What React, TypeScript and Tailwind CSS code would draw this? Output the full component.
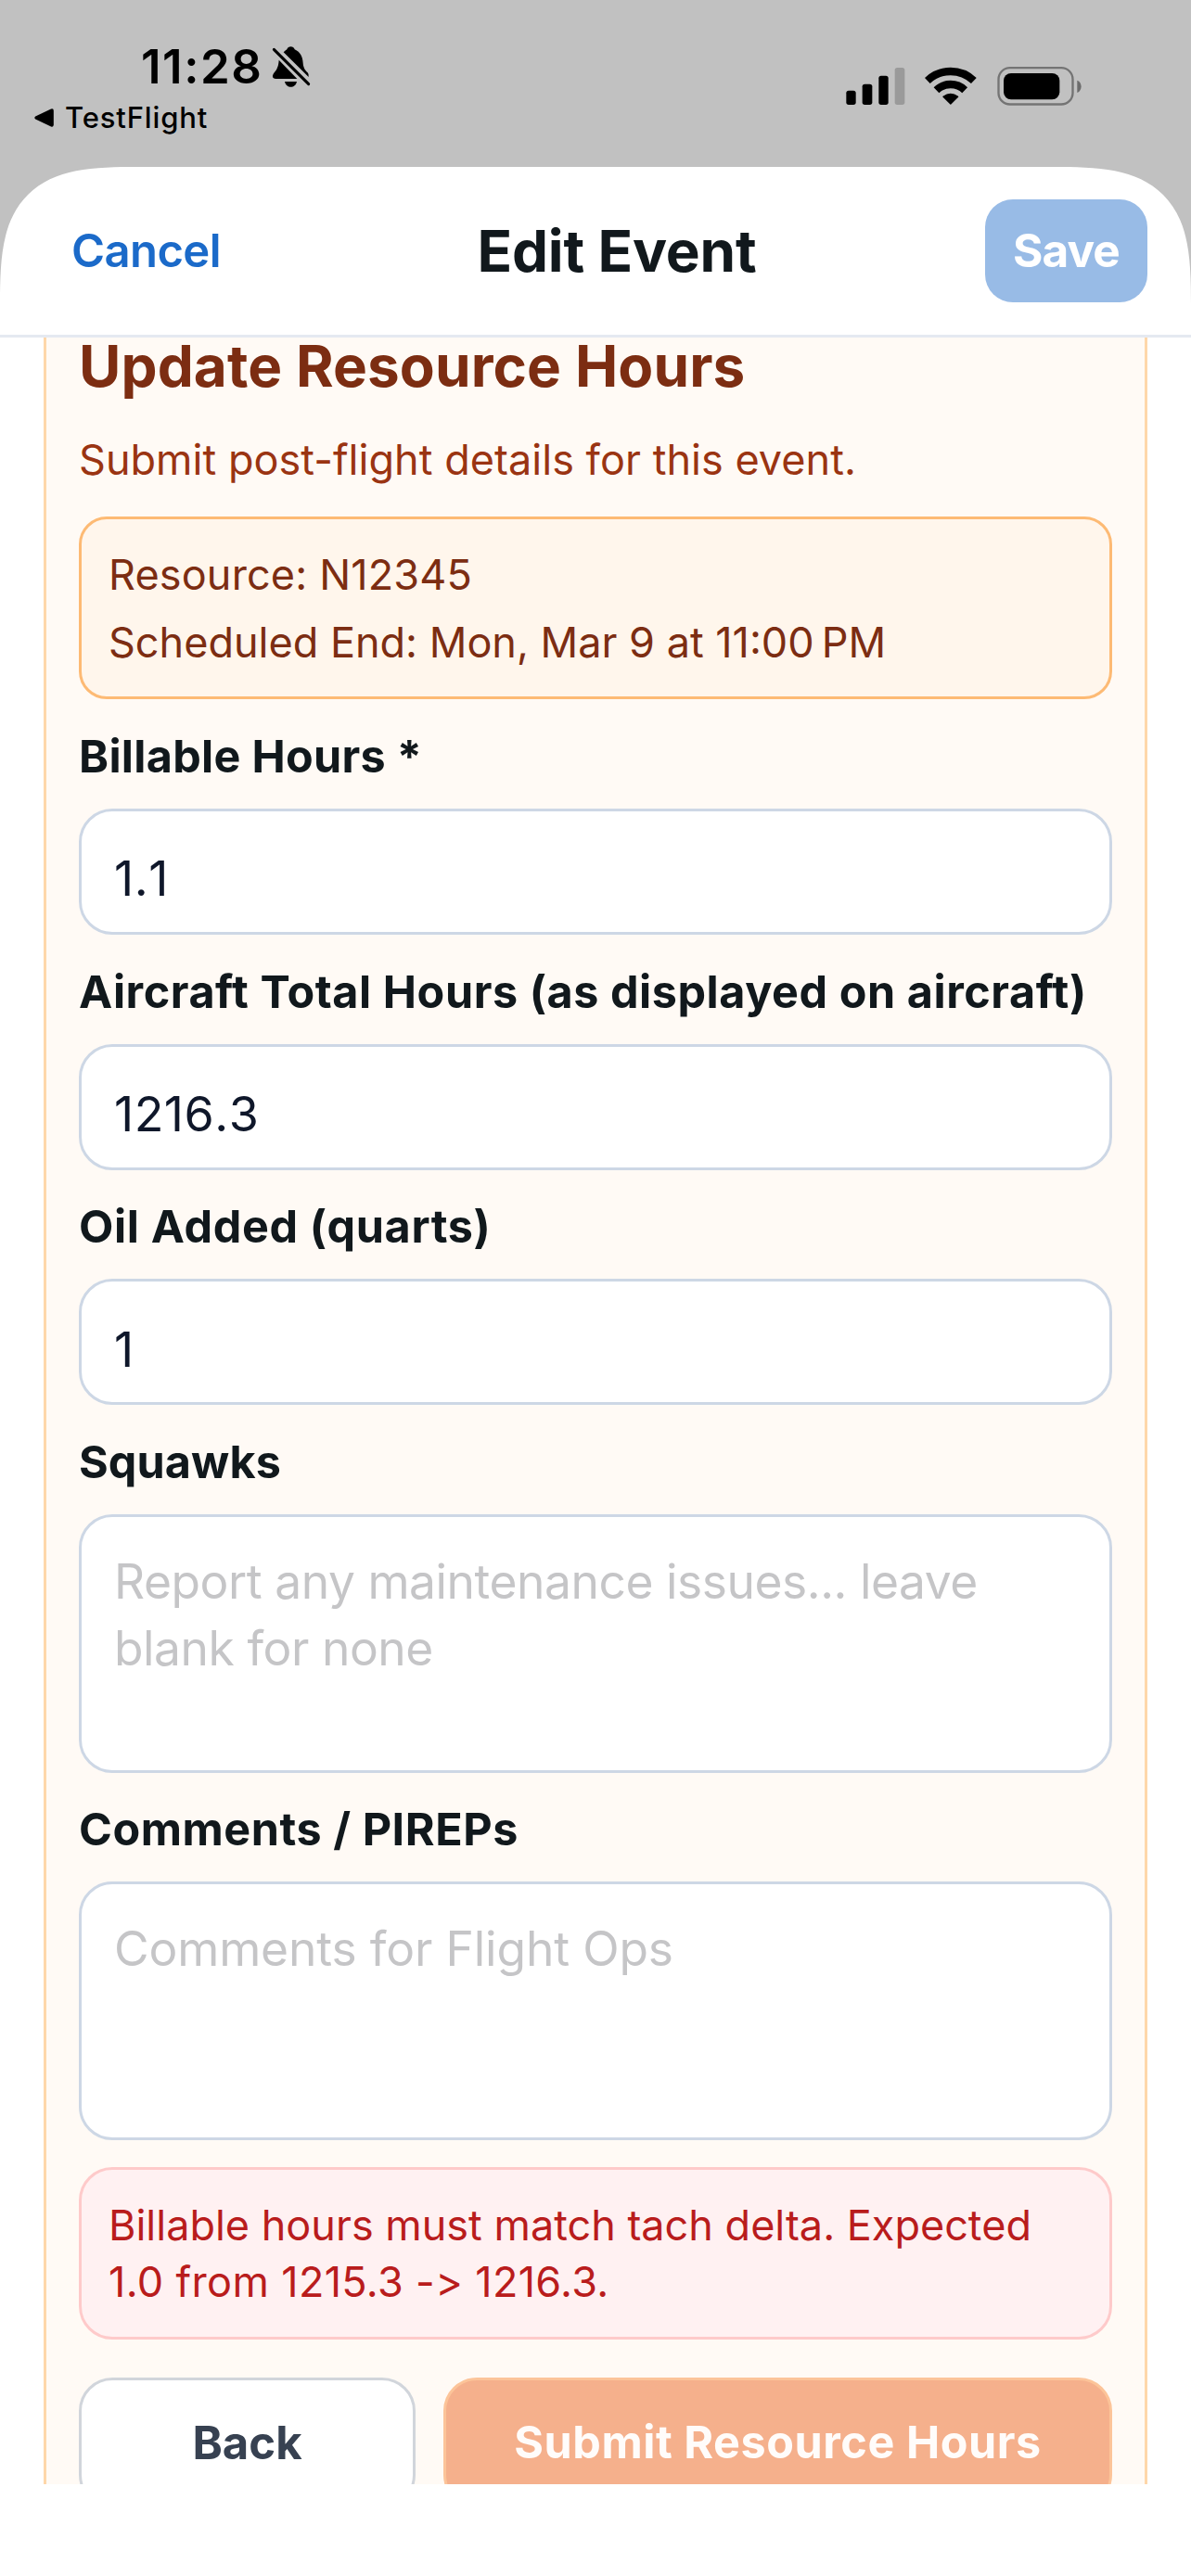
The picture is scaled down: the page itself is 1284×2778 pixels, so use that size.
import React, { ReactNode } from 'react';
import { clsx } from 'clsx';

interface FieldProps {
  label: string;
  labelClassName?: string;
  children: ReactNode;
}

interface TextFieldProps {
  label: string;
  value: string;
  labelClassName?: string;
}

interface NotesFieldProps {
  label: string;
  placeholder: string;
  className?: string;
  labelClassName?: string;
}

const BellOffIcon = () => (
  <svg className="h-[46px] w-[42px]" viewBox="879 149 126 138" fill="currentColor">
    <path d="M917 171C921 167 925 164 928 162C931 150 950 150 953 162C972 170 979 187 980 206C981 222 988 231 995 237Q1000 243 998 251Z" />
    <path d="M902 196C901 215 896 226 887 237C879 247 880 257 892 257H961Z" />
    <path d="M921 266H960C956 289 925 289 921 266Z" />
    <path d="M886 162L998 274" stroke="currentColor" strokeWidth="9" strokeLinecap="round" />
  </svg>
);

const BackTriangleIcon = () => (
  <svg className="h-5 w-[21px]" viewBox="0 0 21 20" fill="currentColor">
    <path d="M1.2 8.6L18 .6Q20.8 -.4 20.8 2.4V17.6Q20.8 20.4 18 19.4L1.2 11.4Q-.6 10 1.2 8.6Z" />
  </svg>
);

const SignalIcon = () => (
  <svg className="h-[42px] w-[64px]" viewBox="154 217 192 126" fill="currentColor">
    <rect x="155" y="294" width="31" height="46" rx="8" />
    <rect x="207" y="273" width="32" height="67" rx="8" />
    <rect x="260" y="246" width="31" height="94" rx="8" />
    <rect x="312" y="220" width="32" height="120" rx="8" fill="#9a9a9a" />
  </svg>
);

const WifiIcon = () => (
  <svg className="h-[42px] w-[56px]" viewBox="411 217 168 126" fill="none" stroke="currentColor" strokeWidth="25">
    <path d="M419.5 262A108.5 108.5 0 0 1 569.5 262" />
    <path d="M448.5 292.5A66.5 66.5 0 0 1 540.5 292.5" />
    <path
      d="M494.5 337L471 314Q494.5 296 518 314Z"
      fill="currentColor"
      strokeWidth="4"
      strokeLinejoin="round"
    />
  </svg>
);

const BatteryIcon = () => (
  <svg className="h-[42px] w-[91px]" viewBox="644 217 273 126">
    <rect x="648.5" y="220.5" width="240" height="118" rx="37" fill="none" stroke="#747474" strokeWidth="7" />
    <rect x="665" y="238" width="181" height="85" rx="24" />
    <path d="M903 261C920 266 920 296 903 301Z" fill="#6c6c6c" />
  </svg>
);

const StatusBar = () => (
  <div className="flex h-[180px] items-start justify-between pr-[118px] pl-[37px] text-black">
    <div className="pt-[42px]">
      <div className="flex items-center pl-[115px]">
        <span className="w-[131px] text-[51px] leading-[60px] font-semibold tracking-[1.5px]">11:28</span>
        <span className="ml-[10px]">
          <BellOffIcon />
        </span>
      </div>
      <div className="mt-[7px] flex items-center gap-[12px]">
        <BackTriangleIcon />
        <span className="text-[31px] leading-[36px] font-medium tracking-[0.85px]">TestFlight</span>
      </div>
    </div>
    <div className="flex items-center pt-[72px]">
      <SignalIcon />
      <span className="ml-[21px]">
        <WifiIcon />
      </span>
      <span className="ml-[22px]">
        <BatteryIcon />
      </span>
    </div>
  </div>
);

const SheetHeader = () => (
  <header className="flex h-[184px] shrink-0 items-center justify-between border-b-[3px] border-[#e5e9f1] px-[47px]">
    <button type="button" className="px-[30px] text-[49px] font-semibold tracking-[-0.6px] text-[#1b6ac9]">
      Cancel
    </button>
    <h1 className="text-[62px] leading-[76px] font-bold tracking-[-0.2px] text-[#11181c]">Edit Event</h1>
    <button
      type="button"
      disabled
      className="h-[111px] w-[175px] rounded-[30px] bg-[#98bbe6] text-[49.5px] font-bold tracking-[-0.9px] text-white"
    >
      Save
    </button>
  </header>
);

const Field = ({ label, labelClassName = 'tracking-[0.55px]', children }: FieldProps) => (
  <label className="mt-[32.8px] block">
    <span
      className={clsx(
        'mb-[27px] block text-[48.5px] leading-[58px] font-bold whitespace-nowrap text-[#11181c]',
        labelClassName
      )}
    >
      {label}
    </span>
    {children}
  </label>
);

const TextField = ({ label, value, labelClassName }: TextFieldProps) => (
  <Field label={label} labelClassName={labelClassName}>
    <input
      defaultValue={value}
      className="block h-[136px] w-full rounded-[36px] border-[3px] border-[#cdd7e5] bg-white px-[35px] pt-[16px] text-[52px] tracking-[0.5px] text-[#0f172a] [font-kerning:none]"
    />
  </Field>
);

const NotesField = ({ label, placeholder, className, labelClassName }: NotesFieldProps) => (
  <Field label={label} labelClassName={labelClassName}>
    <textarea
      placeholder={placeholder}
      className={clsx(
        'block h-[278.4px] w-full resize-none overflow-hidden rounded-[36px] border-[3px] border-[#cdd7e5] bg-white px-[35px] pt-[33px] text-[51.5px] leading-[72px] placeholder:text-[#c5c5c7]',
        className
      )}
    />
  </Field>
);

export default function App() {
  return (
    <div className="h-[2778px] w-[1284px] overflow-hidden bg-[#c1c1c1] font-[Inter,sans-serif] antialiased">
      <StatusBar />

      <div className="flex h-[2598px] flex-col overflow-hidden rounded-t-[150px] bg-white [corner-shape:superellipse(1.63)]">
        <SheetHeader />

        {/* Scrolled form, cut off above the home indicator area */}
        <div className="h-[2315px] shrink-0 overflow-hidden px-[47px]">
          <section className="border-x-[3px] border-[#fed7aa] bg-[#fffaf5] px-[35px] pb-12">
            <h2 className="text-[62px] leading-[62px] font-bold tracking-[0.1px] text-[#7c2d12]">
              Update Resource Hours
            </h2>
            <p className="mt-[43px] text-[45px] leading-[54px] tracking-[0.03px] text-[#9a3412]">
              Submit post-flight details for this event.
            </p>

            <div className="mt-[34px] flex h-[197px] flex-col gap-[12px] rounded-[30px] border-[3px] border-[#fdba74] bg-[#fff6ec] p-[29px] text-[45px] leading-[61px] text-[#7c2d12]">
              <p className="tracking-[0.15px]">Resource: N12345</p>
              <p>Scheduled End: Mon, Mar 9 at 11:00{'\u202f'}PM</p>
            </div>

            <TextField label="Billable Hours *" value="1.1" labelClassName="tracking-[0.3px]" />
            <TextField label="Aircraft Total Hours (as displayed on aircraft)" value="1216.3" />
            <TextField label="Oil Added (quarts)" value="1" labelClassName="tracking-[0.65px]" />
            <NotesField
              label="Squawks"
              placeholder="Report any maintenance issues... leave blank for none"
              labelClassName="tracking-[0.1px]"
              className="tracking-[-0.45px]"
            />
            <NotesField
              label="Comments / PIREPs"
              placeholder="Comments for Flight Ops"
              className="tracking-[-0.15px]"
            />

            <div className="mt-[29px] rounded-[36px] border-[3px] border-[#fecaca] bg-[#fff1f2] px-[29px] py-[29px] text-[45px] leading-[61px] text-[#b91c1c]">
              Billable hours must match tach delta. Expected
              <br />
              <span className="tracking-[0.35px]">1.0 from 1215.3 -&gt; 1216.3.</span>
            </div>

            <div className="mt-[41px] flex gap-[30px]">
              <button
                type="button"
                className="h-[141px] w-[363px] rounded-[36px] border-[3px] border-[#d1d5db] bg-white text-[49px] font-bold text-[#374151]"
              >
                Back
              </button>
              <button
                type="button"
                disabled
                className="h-[141px] flex-1 rounded-[36px] border-[3px] border-[#fcc499] bg-[#f5b08c] text-[48.5px] font-bold tracking-[0.55px] text-[#fffcfa]"
              >
                Submit Resource Hours
              </button>
            </div>
          </section>
        </div>
      </div>
    </div>
  );
}
